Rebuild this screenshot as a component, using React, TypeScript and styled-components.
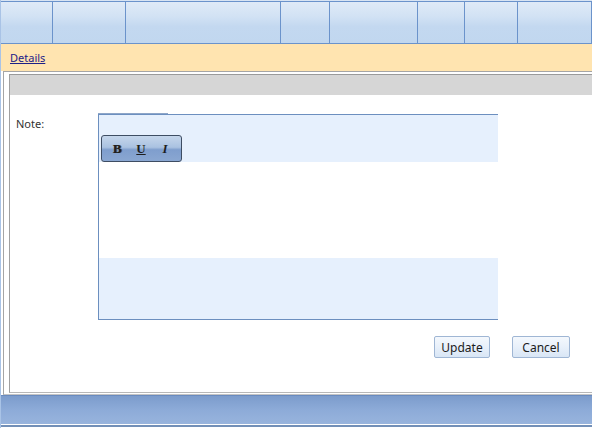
import React from "react";
import styled, { createGlobalStyle } from "styled-components";

const GlobalStyle = createGlobalStyle`
  html, body {
    margin: 0;
    padding: 0;
    background: #ffffff;
  }
  body {
    font-family: "Noto Sans", "DejaVu Sans", sans-serif;
    font-size: 11px;
    color: #2b2b2b;
  }
`;

const Page = styled.div`
  width: 592px;
  height: 428px;
  box-sizing: border-box;
  border-left: 1px solid #a9c3e6;
  display: flex;
  flex-direction: column;
  overflow: hidden;
`;

const HeaderBar = styled.div`
  padding-top: 1px;
  background: #d8e4f3;
`;

const HeaderGrid = styled.div`
  display: grid;
  grid-template-columns: 52px 73px 155px 49px 88px 47px 53px 74px;
  height: 43px;
  box-sizing: border-box;
  border-top: 1px solid #6b93cb;
  border-bottom: 1px solid #6b93cb;
`;

const HeaderCell = styled.div`
  border-right: 1px solid #6b93cb;
  background: linear-gradient(#dfeaf7 0%, #d2e2f4 35%, #c3d8f0 60%, #c1d7ef 100%);
`;

const DetailsBar = styled.div`
  height: 27px;
  display: flex;
  align-items: center;
  padding-left: 9px;
  background: #ffe4b0;
`;

const DetailsLink = styled.a`
  color: #1c2088;
  text-decoration: underline;
  cursor: pointer;
`;

const Panel = styled.div`
  margin-left: 2px;
  padding: 2px 0 1px 5px;
  border-top: 1px solid #a5a5a5;
  border-left: 1px solid #a5a5a5;
  border-bottom: 1px solid #c4c4c4;
  background: #ffffff;
`;

const PanelInner = styled.div`
  display: flex;
  flex-direction: column;
  border-top: 1px solid #9a9a9a;
  border-left: 1px solid #a0a0a0;
  border-bottom: 1px solid #b8b8b8;
`;

const PanelCaption = styled.div`
  height: 20px;
  background: #d6d6d6;
`;

const FormBody = styled.div`
  padding: 19px 22px 34px 6px;
  display: flex;
  flex-direction: column;
`;

const FieldRow = styled.div`
  display: grid;
  grid-template-columns: 82px 400px;
`;

const FieldLabel = styled.label`
  padding-top: 2px;
  line-height: 15px;
  color: #333333;
`;

const Editor = styled.div`
  position: relative;
  width: 400px;
  height: 206px;
  box-sizing: border-box;
  border-top: 1px solid #6c8fbf;
  border-left: 1px solid #6c8fbf;
  border-bottom: 1px solid #6c8fbf;
  display: flex;
  flex-direction: column;

  /* little tab strip above the editor's top edge */
  &::before {
    content: "";
    position: absolute;
    left: -1px;
    top: -2px;
    width: 70px;
    height: 1px;
    background: #8ea6c8;
  }
`;

const EditorBand = styled.div<{ $h: number }>`
  height: ${(p) => p.$h}px;
  background: #e6f0fd;
  box-sizing: border-box;
`;

const ToolBand = styled(EditorBand)`
  padding: 20px 0 0 2px;
`;

const EditArea = styled.div`
  height: 96px;
  background: #ffffff;
`;

const Toolbar = styled.div`
  width: 81px;
  height: 27px;
  box-sizing: border-box;
  border: 1px solid #3e4d63;
  border-radius: 3px;
  background: linear-gradient(#c5d6eb 0%, #aac2e1 45%, #7f9ecd 55%, #8aa7d2 100%);
  display: flex;
  align-items: center;
  padding-left: 3px;
`;

const ToolButton = styled.span<{ $italic?: boolean; $underline?: boolean }>`
  width: 24px;
  text-align: center;
  font-family: "Liberation Serif", "DejaVu Serif", serif;
  font-weight: bold;
  font-size: 13px;
  line-height: 13px;
  color: #1e1e1e;
  font-style: ${(p) => (p.$italic ? "italic" : "normal")};
  text-decoration: ${(p) => (p.$underline ? "underline" : "none")};
  text-shadow: ${(p) => (p.$italic || p.$underline ? "none" : "1px 0 0 #5a5a5a")};
  cursor: default;
`;

const ButtonRow = styled.div`
  margin-top: 16px;
  display: flex;
  justify-content: flex-end;
  gap: 22px;
`;

const Button = styled.button<{ $w: number }>`
  width: ${(p) => p.$w}px;
  height: 22px;
  padding: 0;
  border: 1px solid #9fb6d4;
  border-radius: 2px;
  background: linear-gradient(#f4f8fd 0%, #e8f0fa 50%, #d9e6f5 100%);
  font-family: inherit;
  font-size: 12px;
  color: #1b1b1b;
  cursor: pointer;
`;

const FooterBar = styled.div`
  height: 29px;
  box-sizing: border-box;
  border-top: 1px solid #6a8bbf;
  background: linear-gradient(#7c9ccc 0%, #8dabd8 50%, #98b4dd 100%);
`;

const FooterEdge = styled.div`
  height: 3px;
  box-sizing: border-box;
  border-top: 1px solid #ffffff;
  background: #7390b8;
`;

const columns = [0, 1, 2, 3, 4, 5, 6, 7];

export default function App() {
  return (
    <>
      <GlobalStyle />
      <Page>
        <HeaderBar>
          <HeaderGrid>
            {columns.map((c) => (
              <HeaderCell key={c} />
            ))}
          </HeaderGrid>
        </HeaderBar>

        <DetailsBar>
          <DetailsLink>Details</DetailsLink>
        </DetailsBar>

        <Panel>
          <PanelInner>
            <PanelCaption />
            <FormBody>
              <FieldRow>
                <FieldLabel>Note:</FieldLabel>
                <Editor>
                  <ToolBand $h={47}>
                    <Toolbar>
                      <ToolButton>B</ToolButton>
                      <ToolButton $underline>U</ToolButton>
                      <ToolButton $italic>I</ToolButton>
                    </Toolbar>
                  </ToolBand>
                  <EditArea />
                  <EditorBand $h={61} />
                </Editor>
              </FieldRow>
              <ButtonRow>
                <Button $w={56}>Update</Button>
                <Button $w={58}>Cancel</Button>
              </ButtonRow>
            </FormBody>
          </PanelInner>
        </Panel>

        <FooterBar />
        <FooterEdge />
      </Page>
    </>
  );
}
